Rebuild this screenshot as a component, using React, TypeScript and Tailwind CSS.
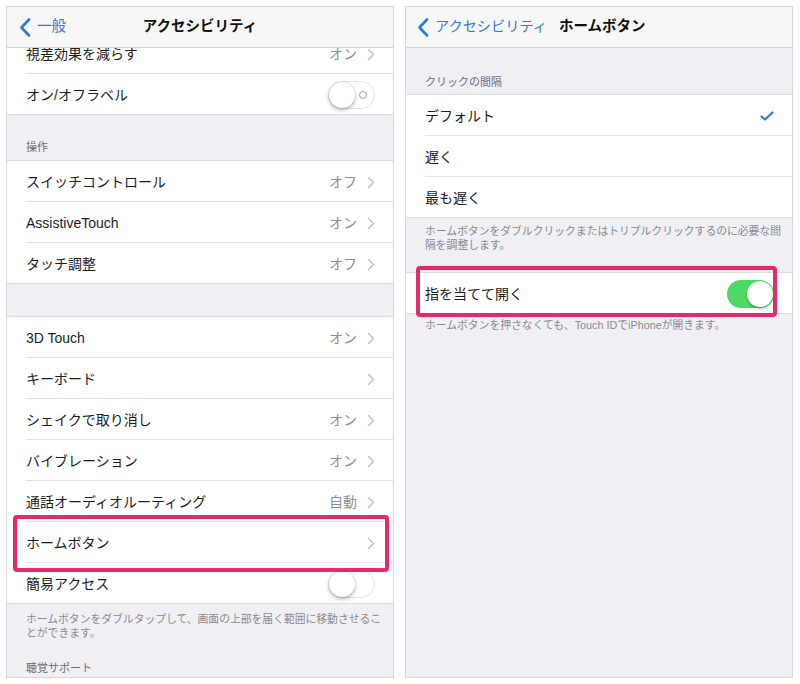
import React from "react";

const font = { fontFamily: '"Liberation Sans", "Noto Sans CJK JP", sans-serif' };

function BackChevron() {
  return (
    <svg width="12" height="19" viewBox="0 0 12 19" className="shrink-0">
      <path d="M10 1.5 L2.5 9.5 L10 17.5" fill="none" stroke="#2b7bd8" strokeWidth="2.6" strokeLinecap="round" strokeLinejoin="round" />
    </svg>
  );
}

function Chevron() {
  return (
    <svg width="8" height="13" viewBox="0 0 8 13" className="shrink-0">
      <path d="M1.5 1.5 L6.5 6.5 L1.5 11.5" fill="none" stroke="#c4c4c9" strokeWidth="1.6" strokeLinecap="round" strokeLinejoin="round" />
    </svg>
  );
}

function Check() {
  return (
    <svg width="14" height="10" viewBox="0 0 14 10" className="shrink-0">
      <path d="M1.5 5.5 L5 8.5 L12.5 1.5" fill="none" stroke="#2b7bd8" strokeWidth="2.2" strokeLinecap="round" strokeLinejoin="round" />
    </svg>
  );
}

function Toggle({ on, label }: { on?: boolean; label?: boolean }) {
  if (on) {
    return (
      <div className="relative w-[47px] h-[28px] rounded-full bg-[#4cd964] shrink-0">
        <div className="absolute right-[1px] top-[1px] w-[26px] h-[26px] rounded-full bg-white shadow-[0_2px_3px_rgba(0,0,0,0.25)]" />
      </div>
    );
  }
  return (
    <div className="relative w-[47px] h-[28px] rounded-full border border-[#e3e3e6] bg-white shrink-0">
      <div className="absolute left-0 top-0 w-[26px] h-[26px] rounded-full bg-white shadow-[0_2px_4px_rgba(0,0,0,0.3),0_0_1px_rgba(0,0,0,0.2)]" />
      {label && (
        <div className="absolute right-[7px] top-[9px] w-[8px] h-[8px] rounded-full border border-[#a0a0a5]" />
      )}
    </div>
  );
}

type RowProps = {
  title: string;
  value?: string;
  chevron?: boolean;
  right?: React.ReactNode;
  last?: boolean;
  highlight?: string;
};

function Row({ title, value, chevron, right, last, highlight }: RowProps) {
  return (
    <div className={`relative flex h-[41px] bg-white pl-[19px] ${last ? "border-b border-[#dcdce0]" : ""}`}>
      <div className={`flex flex-1 items-center pt-[2px] pr-[18px] ${last ? "" : "border-b border-[#e2e2e6]"}`}>
        <span className="flex-1 text-[14px] text-[#1c1c1e]">{title}</span>
        {value && <span className="text-[14px] text-[#8e8e93] mr-[10px]">{value}</span>}
        {chevron && <Chevron />}
        {right}
      </div>
      {highlight && <div className={`absolute z-10 border-[4px] border-[#e6286c] rounded-[4px] ${highlight}`} />}
    </div>
  );
}

function Header({ text, className }: { text: string; className: string }) {
  return (
    <div className={`flex items-end pl-[19px] text-[11px] leading-[14px] text-[#6d6d72] ${className}`}>{text}</div>
  );
}

function Footer({ children, className }: { children: React.ReactNode; className: string }) {
  return <div className={`pl-[19px] text-[10.8px] leading-[14px] text-[#8a8a8e] ${className}`}>{children}</div>;
}

function LeftPanel() {
  return (
    <div className="w-[388px] h-[672px] border border-[#d8d8dc] bg-[#efeff4] overflow-hidden flex flex-col">
      <div className="relative z-20 flex items-center h-[41px] bg-[#f7f7f8] border-b border-[#d4d4d8] px-[12px]">
        <BackChevron />
        <span className="ml-[6px] text-[14.5px] text-[#2b7bd8]">一般</span>
        <span className="absolute inset-x-0 text-center text-[14.5px] font-bold text-[#111] pointer-events-none">アクセシビリティ</span>
      </div>
      <div className="-mt-[15px]">
        <div className="bg-white">
          <Row title="視差効果を減らす" value="オン" chevron />
          <Row title="オン/オフラベル" right={<Toggle label />} last />
        </div>
        <Header text="操作" className="h-[45px] pb-[6px]" />
        <div className="border-t border-[#dcdce0]">
          <Row title="スイッチコントロール" value="オフ" chevron />
          <Row title="AssistiveTouch" value="オン" chevron />
          <Row title="タッチ調整" value="オフ" chevron last />
        </div>
        <div className="h-[32px]" />
        <div className="border-t border-[#dcdce0]">
          <Row title="3D Touch" value="オン" chevron />
          <Row title="キーボード" chevron />
          <Row title="シェイクで取り消し" value="オン" chevron />
          <Row title="バイブレーション" value="オン" chevron />
          <Row title="通話オーディオルーティング" value="自動" chevron />
          <Row title="ホームボタン" chevron highlight="left-[6px] right-[4px] -top-[7px] -bottom-[9px]" />
          <Row title="簡易アクセス" right={<Toggle />} last />
        </div>
        <Footer className="pt-[8px]">
          ホームボタンをダブルタップして、画面の上部を届く範囲に移動させるこ
          <br />
          とができます。
        </Footer>
        <Header text="聴覚サポート" className="pt-[21px]" />
      </div>
    </div>
  );
}

function RightPanel() {
  return (
    <div className="w-[388px] h-[672px] border border-[#d8d8dc] bg-[#efeff4] overflow-hidden flex flex-col">
      <div className="flex items-center h-[41px] bg-[#f7f7f8] border-b border-[#d4d4d8] px-[11px]">
        <BackChevron />
        <span className="ml-[6px] text-[14.2px] text-[#2b7bd8]">アクセシビリティ</span>
        <span className="ml-[12px] text-[14.5px] font-bold text-[#111]">ホームボタン</span>
      </div>
      <Header text="クリックの間隔" className="h-[46px] pb-[5px]" />
      <div className="border-t border-[#dcdce0]">
        <Row title="デフォルト" right={<Check />} />
        <Row title="遅く" />
        <Row title="最も遅く" last />
      </div>
      <Footer className="pt-[6px]">
        ホームボタンをダブルクリックまたはトリプルクリックするのに必要な間
        <br />
        隔を調整します。
      </Footer>
      <div className="h-[20px]" />
      <div className="border-t border-[#dcdce0]">
        <Row title="指を当てて開く" right={<Toggle on />} last highlight="left-[10px] right-[15px] -top-[7px] -bottom-[4px]" />
      </div>
      <Footer className="pt-[4px]">ホームボタンを押さなくても、Touch IDでiPhoneが開きます。</Footer>
    </div>
  );
}

export default function App() {
  return (
    <div className="w-[800px] h-[684px] bg-white flex gap-[11px] pt-[6px] pl-[6px]" style={font}>
      <LeftPanel />
      <RightPanel />
    </div>
  );
}
